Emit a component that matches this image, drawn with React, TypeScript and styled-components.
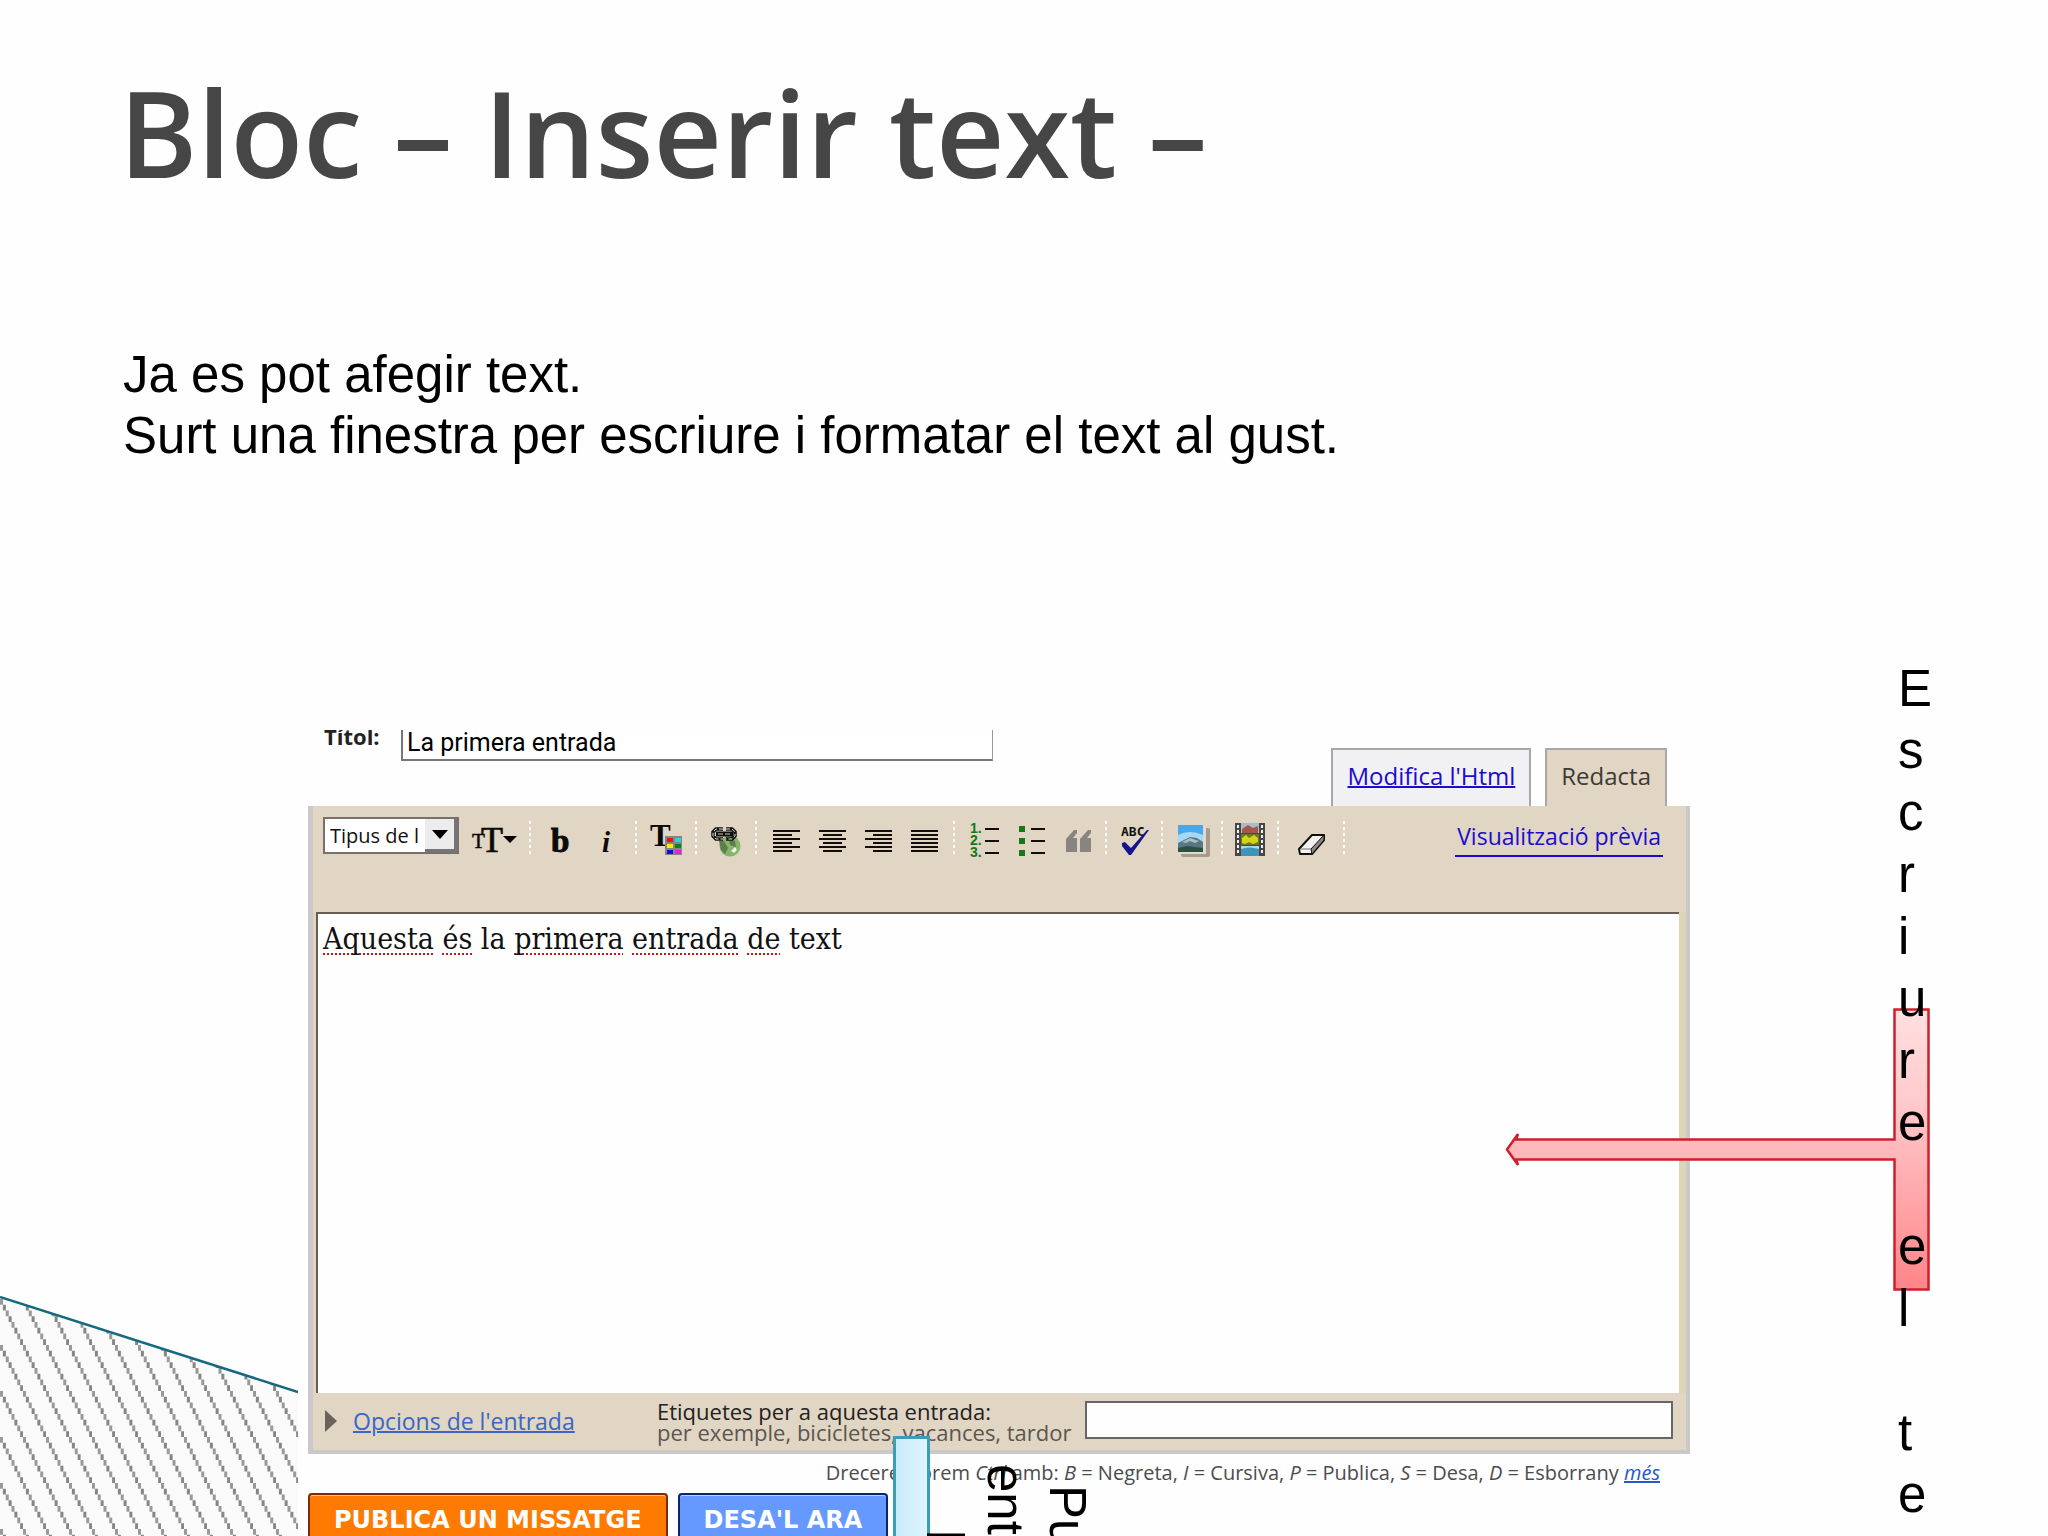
import React from 'react';
import styled, { createGlobalStyle } from 'styled-components';

const sans = `'Liberation Sans', Arial, sans-serif`;
const ui = `'Open Sans', 'Trebuchet MS', sans-serif`;
const serif = `'DejaVu Serif Condensed', 'DejaVu Serif', Georgia, serif`;
const sand = '#e1d5c3';
const frame = '#cbc8ca';

const GlobalStyle = createGlobalStyle`
  *, *::before, *::after { box-sizing: border-box; }
  body { margin: 0; background: #fefefe; color: #000; font-family: ${sans}; }
  button, input, select { font: inherit; margin: 0; }
`;

const Slide = styled.main`
  position: relative;
  height: 100vh;
  overflow: hidden;
  padding-top: 72px;
`;

const Title = styled.h1`
  margin: 0 123px 152px 119px;
  font: 600 119px/120px ${ui};
  color: #464646;
`;

const Intro = styled.p`
  margin: 0 123px 264px;
  font-size: 51px;
  line-height: 1.2;
`;

const Editor = styled.form`
  margin: 0 358px 0 308px;
  font-family: ${ui};
`;

const Head = styled.div`
  display: flex;
  justify-content: space-between;
  height: 76px;
  padding: 0 23px 0 16px;
`;

const TitleField = styled.label`
  display: flex;
  align-items: flex-end;
  gap: 20px;
  height: 31px;
  overflow: hidden;
  font-size: 22px;
  font-weight: 700;
  line-height: 30px;
  color: #222;
  span { padding-bottom: 10px; width: 57px; }
`;

const TitleInput = styled.input`
  width: 592px;
  height: 42px;
  padding: 4px 4px 0;
  border: 2px solid #777;
  border-right: 1px solid #999;
  background: #fff;
  && { font: 400 25px Roboto, sans-serif; }
`;

const Tabs = styled.nav`
  display: flex;
  align-self: flex-end;
  gap: 14px;
`;

const Tab = styled.a<{ $active?: boolean }>`
  height: 58px;
  padding: 0 14px;
  border: 2px solid #aaa7a9;
  border-bottom: 0;
  background: ${p => (p.$active ? sand : '#f1f0f2')};
  color: ${p => (p.$active ? '#3d3a36' : '#1a0dcc')};
  text-decoration: ${p => (p.$active ? 'none' : 'underline')};
  text-decoration-thickness: 2px;
  font-size: 24px;
  line-height: 52px;
`;

const Panel = styled.section`
  background: ${sand};
  border: solid ${frame};
  border-width: 0 4px 4px 5px;
`;

const Toolbar = styled.div`
  display: flex;
  align-items: flex-start;
  height: 106px;
  padding: 11px 23px 0 10px;
`;

const SelectBox = styled.span`
  display: flex;
  width: 136px;
  height: 37px;
  border: 2px solid #77716a;
  background: #fff;
`;

const FontSelect = styled.select`
  appearance: none;
  flex: 1;
  min-width: 0;
  padding: 0 0 0 5px;
  border: 0;
  border-radius: 0;
  background: transparent;
  color: #111;
  && { font-size: 20px; }
`;

const SelectArrow = styled.span`
  display: grid;
  place-items: center;
  width: 32px;
  border: solid #77757a;
  border-width: 0 3px 3px 0;
  background: #ececec;
`;

const Tool = styled.button<{ $wide?: boolean }>`
  display: grid;
  place-items: center;
  width: ${p => (p.$wide ? 44 : 30)}px;
  height: 40px;
  padding: 0;
  border: 0;
  background: none;
  color: #0a0a0a;
  svg { display: block; overflow: visible; }
`;

const ToolGroup = styled.div<{ $pad?: number }>`
  display: flex;
  gap: 16px;
  padding: 2px ${p => p.$pad ?? 14}px 0;
`;

const Divider = styled.i`
  width: 2px;
  height: 36px;
  margin-top: 4px;
  background: repeating-linear-gradient(#fffdf8 0 3px, transparent 3px 6px);
`;

const Preview = styled.a`
  margin-left: auto;
  padding: 0 2px;
  border-bottom: 2px solid #1a0dcc;
  color: #1a0dcc;
  font-size: 23px;
  line-height: 38px;
  text-decoration: none;
`;

const Writing = styled.div`
  height: 481px;
  margin-left: 3px;
  padding: 6px 5px;
  border: solid #665e55;
  border-width: 2px 0 0 2px;
  box-shadow: 7px 0 0 #ddd5b8;
  margin-right: 7px;
  background: #fefefe;
  color: #111;
  font: 30px/38px ${serif};
  outline: 0;
`;

const Misspelt = styled.span`
  text-decoration: underline dotted #c8141e 2px;
  text-decoration-skip-ink: none;
  text-underline-offset: 4px;
`;

const Footer = styled.div`
  display: flex;
  height: 57px;
  padding: 8px 13px 0 12px;
`;

const Options = styled.div`
  display: flex;
  align-items: center;
  gap: 16px;
  width: 332px;
  height: 40px;
  a { color: #3a66c8; font-size: 23px; text-decoration-thickness: 2px; }
`;

const TagLabel = styled.label`
  width: 428px;
  color: #222;
  font-size: 22px;
  line-height: 21px;
  white-space: nowrap;
  small { display: block; color: #5c5650; font-size: 22px; }
`;

const TagInput = styled.input`
  flex: 1;
  min-width: 0;
  height: 38px;
  border: 2px solid #666;
  background: #fefefe;
`;

const Hint = styled.p`
  margin: 5px 30px 6px;
  color: #4c4c4c;
  font-size: 20px;
  line-height: 28px;
  text-align: right;
  a { color: #2458c8; font-style: italic; text-decoration-thickness: 2px; }
`;

const Actions = styled.div`
  display: flex;
  gap: 10px;
`;

const Action = styled.button<{ $tone: string; $edge: string }>`
  height: 54px;
  padding: 0 24px;
  border: 2px solid ${p => p.$edge};
  border-radius: 4px;
  background: ${p => p.$tone};
  box-shadow: inset 0 1px 0 #ffffff88;
  color: #fff;
  && { font: 700 24px/48px 'DejaVu Sans', Verdana, sans-serif; }
`;

const Corner = styled.svg`
  position: absolute;
  left: 0;
  bottom: 0;
`;

const WriteArrow = styled.svg`
  position: absolute;
  right: 117px;
  top: 1007px;
`;

const WriteNote = styled.p`
  position: absolute;
  right: 105px;
  top: 658px;
  width: 45px;
  margin: 0;
  font-size: 51px;
  line-height: 62px;
  span { display: block; white-space: pre; }
`;

const PublishArrow = styled.div`
  position: absolute;
  left: 893px;
  top: 1436px;
  bottom: -40px;
  width: 37px;
  border: 3px solid #3a9eb6;
  background: linear-gradient(90deg, #c9ecfa, #def4fe);
`;

const PublishNote = styled.p`
  position: absolute;
  left: 914px;
  top: 1447px;
  height: 260px;
  margin: 0;
  writing-mode: vertical-rl;
  text-align: center;
  font-size: 51px;
  line-height: 1.2;
`;

const glyph = { fontFamily: 'Liberation Serif', fill: '#0a0a0a' };

const SizeIcon = () => (
  <svg width="44" height="36" viewBox="0 0 44 36">
    <text x="0" y="27" fontSize="21" {...glyph} stroke="#0a0a0a" strokeWidth=".5">T</text>
    <text x="9" y="31" fontSize="36" {...glyph} stroke="#0a0a0a" strokeWidth=".7">T</text>
    <path d="M31 15h14l-7 7z" />
  </svg>
);

const BoldIcon = () => (
  <svg width="30" height="36">
    <text x="6" y="31" fontSize="33" fontWeight="700" stroke="#0a0a0a" {...glyph}>b</text>
  </svg>
);

const ItalicIcon = () => (
  <svg width="30" height="36">
    <text x="11" y="31" fontSize="29" fontWeight="700" fontStyle="italic" {...glyph}>i</text>
  </svg>
);

const swatches = ['#f01010', '#20d8e0', '#f8f000', '#108018', '#1010d0', '#f018f0'];

const ColorIcon = () => (
  <svg width="30" height="36">
    <text x="-1" y="25" fontSize="31" fontWeight="700" {...glyph}>T</text>
    <rect x="14" y="15" width="17" height="19" fill="#858585" />
    {swatches.map((c, i) => (
      <rect key={c} x={16 + (i % 2) * 8} y={17 + Math.floor(i / 2) * 6} width="6" height="4" fill={c} />
    ))}
  </svg>
);

const LinkIcon = () => (
  <svg width="30" height="36" fill="none">
    <circle cx="19" cy="25" r="10.5" fill="#86b468" />
    <path d="M8 20l2 9 4 4 3-6-4-7zM18 17l6 3 1 6-6-2z" fill="#5d7d50" />
    <path d="M20 30l4-4 2 3-3 3z" fill="#eef6e4" />
    <path d="M12 8H5L2 11v4l3 3h7M15 8h6l3 3v4l-3 3h-6" stroke="#111" strokeWidth="3.500" />
    <path d="M12 8H5L2 11v4l3 3h7M15 8h6l3 3v4l-3 3h-6" stroke="#e8e4da" strokeWidth="1" strokeDasharray="4 2" />
    <path d="M5 13h17" stroke="#111" strokeWidth="5" />
    <path d="M7 13h13" stroke="#c8c4bc" strokeWidth="1" strokeDasharray="5 2" />
  </svg>
);

const AlignIcon = ({ side }: { side: 'left' | 'center' | 'right' | 'full' }) => (
  <svg width="30" height="36" shapeRendering="crispEdges">
    {[0, 1, 2, 3, 4, 5].map(i => {
      const w = side === 'full' || i % 2 === 0 ? 27 : 19;
      const x = side === 'right' ? 29 - w : side === 'center' ? 2 + (27 - w) / 2 : 2;
      return <rect key={i} x={x} y={9 + i * 4} width={w} height="2" fill="#140c0c" />;
    })}
  </svg>
);

const NumberedIcon = () => (
  <svg width="30" height="36">
    {[1, 2, 3].map((n, i) => (
      <g key={n}>
        <text x="1" y={12 + i * 12} fontSize="14" fontWeight="700" fontFamily="Liberation Sans" fill="#12791a">{n}.</text>
        <rect x="16" y={7 + i * 12} width="14" height="2" fill="#140c0c" />
      </g>
    ))}
  </svg>
);

const BulletIcon = () => (
  <svg width="30" height="36" shapeRendering="crispEdges">
    {[0, 1, 2].map(i => (
      <g key={i}>
        <rect x="4" y={5 + i * 12} width="6" height="6" fill="#12791a" />
        <rect x="16" y={7 + i * 12} width="14" height="2" fill="#140c0c" />
      </g>
    ))}
  </svg>
);

const QuoteIcon = () => (
  <svg width="30" height="36" fill="#88847f">
    <path d="M5 31V18L13 9h3v3l-4 5h4v14zM19 31V18l8-9h3v3l-4 5h4v14z" />
  </svg>
);

const SpellIcon = () => (
  <svg width="30" height="36">
    <text x="2" y="15" fontSize="13" fontWeight="700" fontFamily="DejaVu Sans Mono" fill="#111">ABC</text>
    <path d="M3 22l3-1 6 6L28 9h2L12 34h-2l-7-9z" fill="#14148c" />
  </svg>
);

const ImageIcon = () => (
  <svg width="30" height="36">
    <rect x="4" y="7" width="29" height="29" rx="2" fill="#8d8270" opacity=".7" />
    <rect x="1" y="4" width="28" height="29" fill="#dedad0" />
    <rect x="1" y="4" width="25" height="27" fill="#4aa8ea" />
    <path d="M1 14q12-6 25 0v8H1z" fill="#a5d8f4" />
    <path d="M1 22l6-3 6-3 7 1 6 4v10H1z" fill="#587684" />
    <path d="M5 21l8-4 9 3-4 2-5-2-4 2z" fill="#a9bcc2" />
    <path d="M1 27l9-2 16 2v4H1z" fill="#2e4e40" />
  </svg>
);

const FilmIcon = () => (
  <svg width="30" height="36">
    <rect x="0" y="2" width="30" height="33" fill="#4a4546" />
    <rect x="6" y="2" width="18" height="10" fill="#a9bccb" />
    <path d="M7 12V8l6-4 5 3 5-2v7z" fill="#a8564c" />
    <rect x="6" y="13" width="18" height="11" fill="#64801c" />
    <path d="M7 17l4-3 3 3 5-3 4 3v4l-5 2-4-2-4 2-3-1z" fill="#d8d414" />
    <rect x="6" y="25" width="18" height="10" fill="#3f94bc" />
    <path d="M6 28q8-3 18 0v-3H6z" fill="#a4dcec" />
    {[0, 1, 2, 3, 4, 5].map(i => (
      <g key={i} fill="#f4f0ee">
        <rect x="2" y={4 + i * 5} width="2" height="3" />
        <rect x="26" y={4 + i * 5} width="2" height="3" />
      </g>
    ))}
  </svg>
);

const EraserIcon = () => (
  <svg width="30" height="36" strokeLinejoin="round">
    <path d="M3 28L16 14h12v5L16 33H4z" fill="#f4f2ee" stroke="#111" strokeWidth="2" />
    <path d="M28 14v5L16 33l-1-5z" fill="#8a8784" stroke="#111" strokeWidth="1" />
    <path d="M4 28h11" stroke="#777" />
  </svg>
);

type Group = { pad?: number; tools: { name: string; icon: React.ReactNode }[] };

const groups: Group[] = [
  { tools: [{ name: 'Negreta', icon: <BoldIcon /> }, { name: 'Cursiva', icon: <ItalicIcon /> }] },
  { tools: [{ name: 'Color del text', icon: <ColorIcon /> }] },
  { tools: [{ name: 'Enllaç', icon: <LinkIcon /> }] },
  {
    tools: [
      { name: 'Esquerra', icon: <AlignIcon side="left" /> },
      { name: 'Centre', icon: <AlignIcon side="center" /> },
      { name: 'Dreta', icon: <AlignIcon side="right" /> },
      { name: 'Justifica', icon: <AlignIcon side="full" /> },
    ],
  },
  {
    tools: [
      { name: 'Llista numerada', icon: <NumberedIcon /> },
      { name: 'Llista', icon: <BulletIcon /> },
      { name: 'Cita', icon: <QuoteIcon /> },
    ],
  },
  { pad: 12, tools: [{ name: 'Ortografia', icon: <SpellIcon /> }] },
  { tools: [{ name: 'Imatge', icon: <ImageIcon /> }] },
  { pad: 12, tools: [{ name: 'Vídeo', icon: <FilmIcon /> }] },
  { pad: 17, tools: [{ name: 'Esborra el format', icon: <EraserIcon /> }] },
];

const shortcuts = [['B', 'Negreta'], ['I', 'Cursiva'], ['P', 'Publica'], ['S', 'Desa'], ['D', 'Esborrany']];

export default function App() {
  return (
    <Slide>
      <GlobalStyle />
      <Corner width="298" height="240" viewBox="0 0 298 240" aria-hidden="true">
        <defs>
          <pattern id="hatch" width="23" height="46" patternUnits="userSpaceOnUse" y="3">
            {[0, 1, 2, 3, 4, 5, 6, 7].map(i => (
              <rect key={i} x={i * 2.875} y={i * 5.75} width="3" height="5.750" fill={i % 2 ? '#858585' : '#999'} />
            ))}
          </pattern>
        </defs>
        <path d="M0 1L298 96V240H0z" fill="#fbfafb" />
        <path d="M0 1L298 96V240H0z" fill="url(#hatch)" />
        <path d="M0 1L298 96" stroke="#14697f" strokeWidth="2.500" />
      </Corner>

      <Title>Bloc – Inserir text –</Title>
      <Intro>
        Ja es pot afegir text.
        <br />
        Surt una finestra per escriure i formatar el text al gust.
      </Intro>

      <Editor onSubmit={e => e.preventDefault()}>
        <Head>
          <TitleField>
            <span>Títol:</span>
            <TitleInput defaultValue="La primera entrada" />
          </TitleField>
          <Tabs>
            <Tab href="#html">Modifica l'Html</Tab>
            <Tab href="#redacta" $active>Redacta</Tab>
          </Tabs>
        </Head>

        <Panel>
          <Toolbar>
            <SelectBox>
              <FontSelect aria-label="Tipus de lletra">
                <option>Tipus de l</option>
              </FontSelect>
              <SelectArrow>
                <svg width="16" height="9"><path d="M0 0h16L8 9z" /></svg>
              </SelectArrow>
            </SelectBox>
            <ToolGroup $pad={13}>
              <Tool type="button" aria-label="Mida" $wide><SizeIcon /></Tool>
            </ToolGroup>
            <Divider />
            {groups.map(group => (
              <React.Fragment key={group.tools[0].name}>
                <ToolGroup $pad={group.pad}>
                  {group.tools.map(t => (
                    <Tool key={t.name} type="button" aria-label={t.name}>{t.icon}</Tool>
                  ))}
                </ToolGroup>
                <Divider />
              </React.Fragment>
            ))}
            <Preview href="#previa">Visualització prèvia</Preview>
          </Toolbar>

          <Writing role="textbox" aria-label="Entrada" contentEditable suppressContentEditableWarning spellCheck={false}>
            <Misspelt>Aquesta</Misspelt> <Misspelt>és</Misspelt> la <Misspelt>primera</Misspelt>{' '}
            <Misspelt>entrada</Misspelt> <Misspelt>de</Misspelt> text
          </Writing>

          <Footer>
            <Options>
              <svg width="12" height="22"><path d="M0 0l12 11L0 22z" fill="#6a625b" /></svg>
              <a href="#opcions">Opcions de l'entrada</a>
            </Options>
            <TagLabel htmlFor="tags">
              Etiquetes per a aquesta entrada:
              <small>per exemple, bicicletes, vacances, tardor</small>
            </TagLabel>
            <TagInput id="tags" />
          </Footer>
        </Panel>

        <Hint>
          Dreceres, prem <em>Ctrl</em> amb:{' '}
          {shortcuts.map(([k, v], i) => (
            <React.Fragment key={k}>
              <em>{k}</em> = {v}{i < shortcuts.length - 1 ? ', ' : ' '}
            </React.Fragment>
          ))}
          <a href="#mes">més</a>
        </Hint>

        <Actions>
          <Action $tone="#ff7a00" $edge="#7c2c00">PUBLICA UN MISSATGE</Action>
          <Action type="button" $tone="#6699ff" $edge="#0c2470">DESA'L ARA</Action>
        </Actions>
      </Editor>

      <WriteArrow width="426" height="286" viewBox="0 0 426 286" aria-hidden="true">
        <defs>
          <linearGradient id="rose" x1="0" y1="0" x2="0" y2="1">
            <stop offset="0" stopColor="#ffe0e0" />
            <stop offset=".35" stopColor="#ffc8ca" />
            <stop offset="1" stopColor="#ff8589" />
          </linearGradient>
        </defs>
        <path
          d="M389.500 2.500H423.500V282.500H389.500V152.500H11L13 158L2 142.500L13 127L11 132.500H389.500z"
          fill="url(#rose)"
          stroke="#d01f2b"
          strokeWidth="2.500"
        />
      </WriteArrow>
      <WriteNote>
        {'Escriure el te'.split('').map((c, i) => <span key={i}>{c}</span>)}
      </WriteNote>

      <PublishArrow />
      <PublishNote>
        Publicar
        <br />
        entrada al
        <br />
        bloc
      </PublishNote>
    </Slide>
  );
}
